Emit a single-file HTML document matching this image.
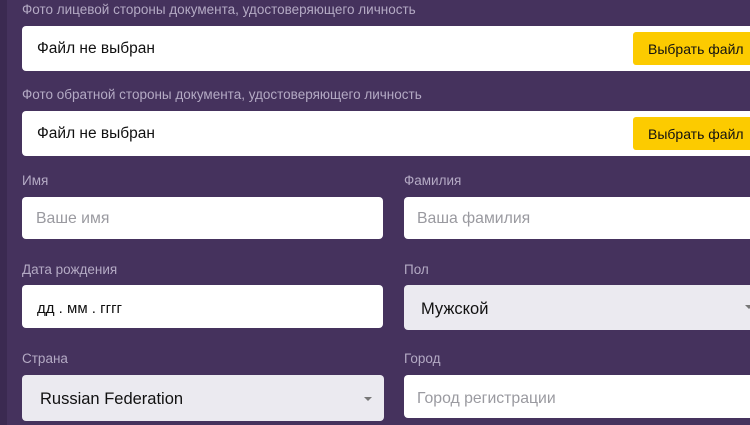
<!DOCTYPE html>
<html><head><meta charset="utf-8"><style>
*{margin:0;padding:0;box-sizing:border-box}
body{width:750px;height:425px;overflow:hidden;background:#45325d;font-family:"Liberation Sans","Noto Sans CJK SC",sans-serif;position:relative}
.edge{position:absolute;left:0;top:0;width:7px;height:425px;background:#3b2a51}
.l{position:absolute;color:#b4aac4;font-size:13.5px}
.b{position:absolute;background:#fff;border-radius:4px}
.g{background:#ebeaf0}
.t{position:absolute;font-size:15px;color:#111}
.p{position:absolute;font-size:15.8px;color:#9a9aa0}
.btn{position:absolute;background:#fccb00;border-radius:3px;font-size:14px;color:#111;padding:9px 0 0 15px}
.arr{position:absolute;width:0;height:0;border-left:4px solid transparent;border-right:4px solid transparent;border-top:4px solid #777}
</style></head><body>
<div class="edge"></div>
<div class="l" style="left:22px;top:2px">Фото лицевой стороны документа, удостоверяющего личность</div>
<div class="b" style="left:22px;top:26px;width:740px;height:45px"></div>
<div class="t" style="left:37px;top:40px;font-size:15.5px">Файл не выбран</div>
<div class="btn" style="left:633px;top:32px;width:130px;height:33px">Выбрать файл</div>
<div class="l" style="left:22px;top:87px">Фото обратной стороны документа, удостоверяющего личность</div>
<div class="b" style="left:22px;top:111px;width:740px;height:45px"></div>
<div class="t" style="left:37px;top:125px;font-size:15.5px">Файл не выбран</div>
<div class="btn" style="left:633px;top:117px;width:130px;height:33px">Выбрать файл</div>

<div class="l" style="left:22px;top:173px">Имя</div>
<div class="b" style="left:22px;top:197px;width:361px;height:42px"></div>
<div class="p" style="left:36px;top:210px">Ваше имя</div>
<div class="l" style="left:404px;top:173px">Фамилия</div>
<div class="b" style="left:404px;top:197px;width:360px;height:42px"></div>
<div class="p" style="left:417px;top:210px">Ваша фамилия</div>

<div class="l" style="left:22px;top:262px">Дата рождения</div>
<div class="b" style="left:22px;top:285px;width:361px;height:43px"></div>
<div class="t" style="left:37px;top:300px">дд . мм . гггг</div>
<div class="l" style="left:404px;top:262px">Пол</div>
<div class="b g" style="left:404px;top:285px;width:360px;height:45px"></div>
<div class="t" style="left:421px;top:300px;font-size:16.5px">Мужской</div>
<div class="arr" style="left:745px;top:305px"></div>

<div class="l" style="left:22px;top:351px">Страна</div>
<div class="b g" style="left:22px;top:375px;width:362px;height:46px"></div>
<div class="t" style="left:40px;top:390px;font-size:16.5px">Russian Federation</div>
<div class="arr" style="left:364px;top:397px"></div>
<div class="l" style="left:404px;top:351px">Город</div>
<div class="b" style="left:404px;top:375px;width:360px;height:43px"></div>
<div class="p" style="left:417px;top:390px">Город регистрации</div>
</body></html>
